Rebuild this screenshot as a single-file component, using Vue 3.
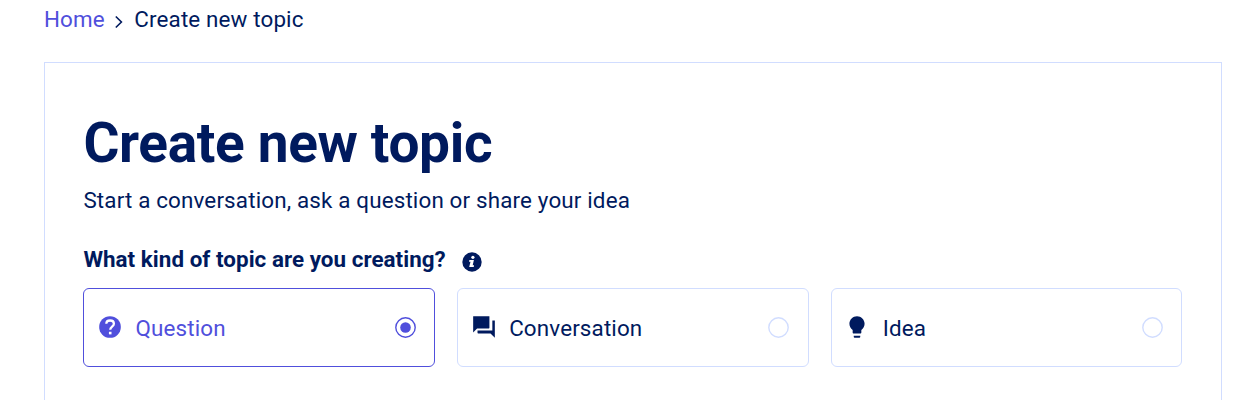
<script setup>
import { ref } from 'vue'
const selected = ref('Question')
const topics = ['Question', 'Conversation', 'Idea']
</script>

<template>
  <div class="page">
    <nav class="crumbs">
      <a class="home">Home</a>
      <svg class="chevron" viewBox="0 0 10 14"><path d="M1.8 1.5 7.4 7 1.8 12.5" /></svg>
      <span>Create new topic</span>
    </nav>
    <main class="panel">
      <h1>Create new topic</h1>
      <p class="lead">Start a conversation, ask a question or share your idea</p>
      <div class="prompt">
        <span>What kind of topic are you creating?</span>
        <svg class="info" viewBox="0 0 20 20">
          <circle cx="10" cy="10" r="9.7" fill="#001a5e" />
          <circle cx="10.9" cy="5.3" r="1.6" fill="#fff" />
          <path d="M7.4 8.1h4.5l-1.2 5.2h1.4l-.4 1.8H7.2l1.3-5.3H7z" fill="#fff" />
        </svg>
      </div>
      <div class="options">
        <div v-for="t in topics" :key="t" class="option" :class="{ active: t === selected }" @click="selected = t">
          <svg class="icon" viewBox="0 0 24 24" fill="currentColor">
            <g v-if="t === 'Question'">
              <circle cx="12" cy="12" r="10" />
              <path d="M8.6 9.1c0-2 1.4-3.1 3.5-3.1s3.5 1.2 3.5 3c0 2.8-3.4 2.7-3.4 5.6" fill="none" stroke="#fff" stroke-width="2.1" />
              <path d="M11 16.4h2.4v2.4H11z" fill="#fff" />
            </g>
            <path v-else-if="t === 'Conversation'" d="M21.7 6h-2v9.3H6v2c0 .4.2.7.7.7H18l4 4V6.3c0-.2-.1-.3-.3-.3zM17 12.8V2.3c0-.2-.1-.3-.3-.3H2.3c-.2 0-.3.1-.3.3V17l3.6-3.6h10.8c.4 0 .6-.2.6-.6z" />
            <path v-else d="M9 21c0 .55.45 1 1 1h4c.55 0 1-.45 1-1v-1H9v1zm3-19C8.14 2 5 5.14 5 9c0 2.38 1.19 4.47 3 5.74V17c0 .55.45 1 1 1h6c.55 0 1-.45 1-1v-2.26c1.81-1.27 3-3.36 3-5.74 0-3.86-3.14-7-7-7z" />
          </svg>
          <span class="label">{{ t }}</span>
          <svg class="radio" viewBox="0 0 21 21">
            <circle cx="10.5" cy="10.5" r="9.7" fill="none" stroke="currentColor" stroke-width="1.4" />
            <circle v-if="t === selected" cx="10.5" cy="10.5" r="5.3" fill="currentColor" />
          </svg>
        </div>
      </div>
    </main>
  </div>
</template>

<style>
body { margin: 0; overflow: hidden; background: #fff; }
</style>
<style scoped>
.page { height: 400px; overflow: hidden; padding: 0 24px 0 44px; box-sizing: border-box; font-family: Roboto, sans-serif; color: #001a5e; font-size: 22.4px; letter-spacing: .14px; }
.crumbs { height: 62px; box-sizing: border-box; padding-top: 4px; line-height: 30px; display: flex; }
.home { color: #504fdc; }
.chevron { width: 10px; height: 14px; margin: 10.5px 10px 0 9.5px; fill: none; stroke: currentColor; stroke-width: 1.6; }
.panel { border: 1px solid #d1ddff; height: 400px; box-sizing: border-box; padding: 48px 38.6px 0 38.4px; }
h1 { margin: 0; font-size: 55px; line-height: 64px; font-weight: 700; letter-spacing: -.35px; }
.lead { margin: 9px 0 0; line-height: 32px; letter-spacing: .155px; }
.prompt { display: flex; margin-top: 27px; line-height: 32px; font-weight: 700; letter-spacing: .04px; }
.info { width: 20px; height: 20px; margin: 9px 0 0 16px; }
.options { display: grid; grid-template-columns: repeat(3, 1fr); gap: 22px; margin-top: 13px; }
.option { height: 79px; box-sizing: border-box; border: 1px solid #d1ddff; border-radius: 6px; display: flex; align-items: center; padding: 0 18.4px 0 12.6px; }
.option.active { border-color: #504fdc; color: #504fdc; }
.icon { width: 26px; height: 26px; margin-bottom: 1px; }
.label { margin-left: 12.5px; flex: 1; }
.radio { width: 21px; height: 21px; margin-bottom: 1px; color: #d1ddff; }
.active .radio { color: #504fdc; }
</style>
